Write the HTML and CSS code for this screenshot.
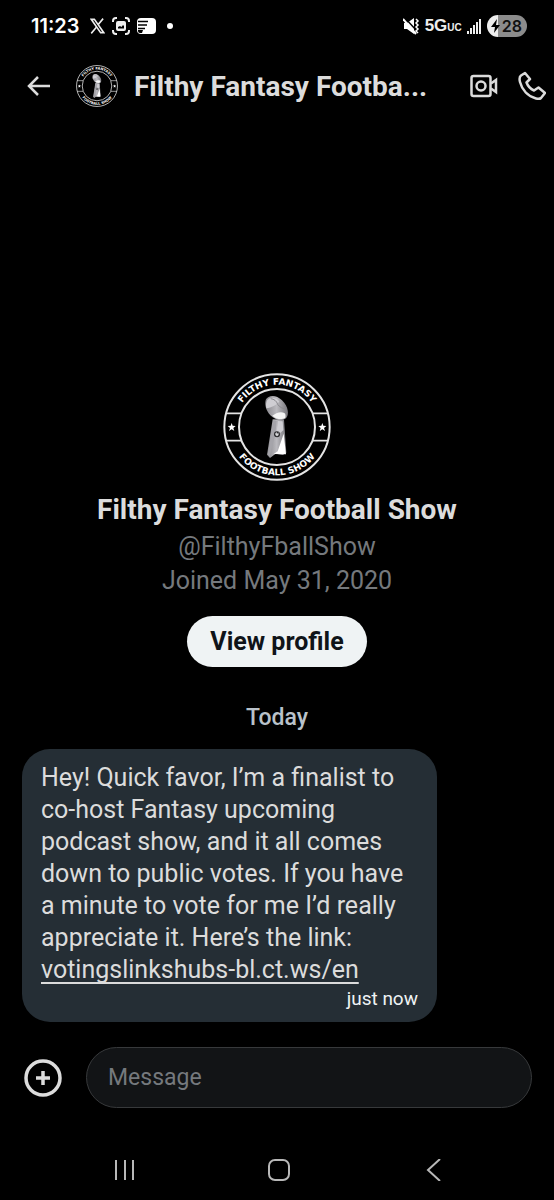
FILE: index.html
```html
<!DOCTYPE html>
<html lang="en">
<head>
  <meta charset="UTF-8">
  <meta name="viewport" content="width=device-width, initial-scale=1">
  <title>Messages</title>
  <link rel="stylesheet" href="styles.css">
</head>
<body>

  <!-- Shared logo -->
  <svg class="sprite" aria-hidden="true">
    <defs>
      <linearGradient id="silver" x1="0" y1="0" x2="1" y2="0">
        <stop offset="0" stop-color="#88878c"/>
        <stop offset="0.5" stop-color="#bbbabf"/>
        <stop offset="1" stop-color="#77767b"/>
      </linearGradient>
      <path id="arcTop" d="M35 162a127 127 0 0 1 254 0"/>
      <path id="arcBottom" d="M17 162a145 145 0 0 0 290 0"/>
      <symbol id="logo" viewBox="0 0 324 324">
        <circle cx="162" cy="162" r="158" fill="#000" stroke="#e4e4e4" stroke-width="6"/>
        <circle cx="162" cy="162" r="114" fill="none" stroke="#e4e4e4" stroke-width="6"/>
        <path d="M9 121h46M9 203h46M269 121h46M269 203h46" stroke="#e4e4e4" stroke-width="5"/>
        <path d="M26 150l3 8 9 1-7 6 3 9-8-5-8 5 3-9-7-6 9-1zM298 150l3 8 9 1-7 6 3 9-8-5-8 5 3-9-7-6 9-1z" fill="#fff"/>
        <text class="logo-text"><textPath href="#arcTop" startOffset="50%">FILTHY FANTASY</textPath></text>
        <text class="logo-text"><textPath href="#arcBottom" startOffset="50%">FOOTBALL SHOW</textPath></text>
        <!-- trophy -->
        <path d="M149 139l34 1 7 99-10 7-22-4-17 13-9-10z" fill="url(#silver)"/>
        <path d="M152 143l9 1-4 40-17 66-6-6z" fill="#a5a4aa"/>
        <path d="M182 182l7 62-37-1 12-8z" fill="#fff"/>
        <path d="M165 144l14 1 2 27-14 12-6-9z" fill="#cfced3"/>
        <path d="M129 79c7-13 31-15 48 3 20 19 22 44 12 54-13 10-32 6-47-9-15-16-18-36-13-48z" fill="url(#silver)"/>
        <path d="M133 81c9-12 29-7 36 5-8 9-24 18-39 20-2-9-1-18 3-25z" fill="#cfced3"/>
        <path d="M143 77c10 1 18 7 21 17 5 8 16 14 27 14" fill="none" stroke="#8a898e" stroke-width="3"/>
        <path d="M148 128c10-8 25-14 36-8 4 3 4 8 3 14-12 8-27 4-39-6z" fill="#f4f4f4"/>
        <circle cx="162" cy="184" r="9" fill="#29292c"/>
        <path d="M157 181l4-4 1 6 4-5 1 8-5 4-5-4z" fill="#d6d6d8"/>
      </symbol>
    </defs>
  </svg>

  <div class="screen">

    <!-- Status Bar -->
    <div class="status-bar">
      <div class="status-left">
        <span class="clock">11:23</span>
        <svg width="15" height="16" viewBox="0 0 24 24" preserveAspectRatio="none" fill="none" stroke="#eee">
          <path d="M2 2h5l15 20h-5z" stroke-width="2.500"/>
          <path d="M21 1l-8 9M10.500 13.500L2 23" stroke-width="2.500"/>
        </svg>
        <svg width="18" height="18" viewBox="0 0 18 18" fill="none" stroke="#eee" stroke-width="2">
          <path d="M1 5V4a3 3 0 0 1 3-3h1M13 1h1a3 3 0 0 1 3 3v1M17 13v1a3 3 0 0 1-3 3h-1M5 17H4a3 3 0 0 1-3-3v-1"/>
          <rect x="4" y="4" width="10" height="10" rx="2" fill="#eee" stroke="none"/>
          <path d="M6 11.500V10l2-1 1.500 1L11 8l1 1v2.500z" fill="#000" stroke="none"/>
        </svg>
        <svg width="19" height="16" viewBox="0 0 19 16">
          <rect x="0" y="0" width="19" height="16" rx="4" fill="#fff"/>
          <path d="M1 3.500h10M1 7h9M1 10.500h7" stroke="#000" stroke-width="1.500"/>
          <path d="M1 12h5l-1 3H3a2 2 0 0 1-2-2z" fill="#000"/>
        </svg>
        <span class="dot"></span>
      </div>
      <div class="status-right">
        <svg width="17" height="17" viewBox="0 0 17 17">
          <path d="M1 5h3L11 0v16L4 11H1z" fill="#fff"/>
          <path d="M1 -1l13 14" stroke="#000" stroke-width="1.500"/>
          <path d="M0 1l13 15" stroke="#fff" stroke-width="2"/>
          <path d="M13 1l2 2-2 2 2 2-2 2 2 2-2 2 2 2" fill="none" stroke="#fff" stroke-width="1.500"/>
        </svg>
        <span class="network">5G<small>UC</small></span>
        <svg width="15" height="15" viewBox="0 0 15 15" fill="#eee">
          <path d="M0 12h2v3H0zM3 9h2v6H3zM6 6h2v9H6zM9 3h2v12H9zM12 0h2v15h-2z"/>
        </svg>
        <span class="battery">
          <svg width="9" height="14" viewBox="0 0 9 14"><path d="M6 0L0 8h4l-1 6 6-8H5z" fill="#000"/></svg>
          28
        </span>
      </div>
    </div>

    <!-- Chat Header -->
    <header class="chat-header">
      <button class="icon-btn" aria-label="Back">
        <svg width="24" height="20" viewBox="0 0 24 20" fill="none" stroke="#dcdcdc" stroke-width="2.500">
          <path d="M23 10H2M11 1L2 10l9 9"/>
        </svg>
      </button>
      <svg class="avatar-small"><use href="#logo"/></svg>
      <h1>Filthy Fantasy Footba...</h1>
      <button class="icon-btn" aria-label="Video call">
        <svg width="28" height="24" viewBox="0 0 28 24" fill="none" stroke="#dcdcdc" stroke-width="2.500">
          <rect x="1.500" y="2" width="19" height="20" rx="2"/>
          <circle cx="11" cy="12" r="4.500"/>
          <path d="M21 9.500l5-3.500v12l-5-3.500"/>
        </svg>
      </button>
      <button class="icon-btn" aria-label="Call">
        <svg width="28" height="30" viewBox="0 0 28 30" fill="none" stroke="#dcdcdc" stroke-width="2.500" stroke-linejoin="round">
          <path d="M7 2L3 4.500C1 6 1.500 9 2 11c2 8 8 14.500 16 16.500 2 .5 4 .5 5-.5l4-5-6.500-5.500-4.500 3c-3.500-1.500-6-4-7.500-8L12 8z"/>
        </svg>
      </button>
    </header>

    <!-- Conversation -->
    <main class="conversation">
      <section class="profile">
        <svg class="avatar"><use href="#logo"/></svg>
        <h2>Filthy Fantasy Football Show</h2>
        <p>@FilthyFballShow</p>
        <p>Joined May 31, 2020</p>
        <button class="profile-btn">View profile</button>
      </section>

      <div class="day">Today</div>

      <div class="bubble">
        <p>Hey! Quick favor, I’m a finalist to co-host Fantasy upcoming podcast show, and it all comes down to public votes. If you have a minute to vote for me I’d really appreciate it. Here’s the link: <a href="#">votingslinkshubs-bl.ct.ws/en</a></p>
        <time>just now</time>
      </div>
    </main>

    <!-- Message Box -->
    <form class="composer">
      <button type="button" class="icon-btn" aria-label="Add attachment">
        <svg width="38" height="38" viewBox="0 0 38 38" fill="none" stroke="#dcdcdc">
          <circle cx="19" cy="19" r="17" stroke-width="3.500"/>
          <path d="M12 19h14M19 12v14" stroke-width="3.500"/>
        </svg>
      </button>
      <input type="text" placeholder="Message" aria-label="Message">
    </form>

    <!-- System Navigation -->
    <nav class="system-nav">
      <button class="icon-btn" aria-label="Recent apps">
        <svg width="22" height="22" viewBox="0 0 22 22" stroke="#b8b8b8" stroke-width="2">
          <path d="M2 1v20M11 1v20M19 1v20"/>
        </svg>
      </button>
      <button class="icon-btn" aria-label="Home">
        <svg width="22" height="22" viewBox="0 0 22 22" fill="none" stroke="#b8b8b8" stroke-width="2">
          <rect x="1" y="1" width="20" height="20" rx="6"/>
        </svg>
      </button>
      <button class="icon-btn" aria-label="Back">
        <svg width="22" height="22" viewBox="0 0 22 22" fill="none" stroke="#b8b8b8" stroke-width="2">
          <path d="M18 0L6 11l12 11"/>
        </svg>
      </button>
    </nav>

  </div>

</body>
</html>
```

FILE: styles.css
```css
* {
  box-sizing: border-box;
}

body {
  margin: 0;
  background-color: #000;
  color: #dcdcdc;
  font-family: Roboto, 'Liberation Sans', sans-serif;
}

h1, h2, p {
  margin: 0;
}

svg {
  display: block;
  flex-shrink: 0;
}

.sprite {
  position: absolute;
  width: 0;
  height: 0;
}

.screen {
  min-height: 100vh;
  display: flex;
  flex-direction: column;
}

.icon-btn {
  padding: 0;
  border: none;
  background: none;
  cursor: pointer;
}

/* Status Bar */
.status-bar {
  height: 52px;
  padding: 0 27px 0 31px;
  display: flex;
  align-items: center;
  justify-content: space-between;
}

.status-left {
  display: flex;
  align-items: center;
  gap: 7px;
}

.clock {
  margin-right: 4px;
  color: #fff;
  font-family: Inter, sans-serif;
  font-size: 20px;
  font-weight: 600;
}

.dot {
  width: 6px;
  height: 6px;
  margin-left: 4px;
  border-radius: 50%;
  background-color: #fff;
}

.status-right {
  display: flex;
  align-items: center;
  gap: 5px;
}

.network {
  color: #eee;
  font-family: 'Liberation Sans', sans-serif;
  font-size: 17px;
  font-weight: 700;
}

.network small {
  font-size: 10px;
  font-weight: 700;
}

.battery {
  height: 22px;
  padding: 0 5px 0 4px;
  display: flex;
  align-items: center;
  gap: 2px;
  border-radius: 11px;
  background: linear-gradient(to right, #eee 28%, #8c8c8c 28%);
  color: #111;
  font-family: Inter, sans-serif;
  font-size: 16px;
  font-weight: 600;
}

/* Chat Header */
.chat-header {
  height: 68px;
  padding: 0 8px 0 27px;
  display: flex;
  align-items: center;
}

.avatar-small {
  width: 42px;
  height: 42px;
  margin: 0 16px 0 25px;
}

.chat-header h1 {
  flex: 1;
  font-size: 28px;
  font-weight: 700;
  white-space: nowrap;
}

.chat-header .icon-btn + .icon-btn {
  margin-left: 20px;
}

.logo-text {
  fill: #fff;
  font-family: 'DejaVu Sans', sans-serif;
  font-size: 27px;
  font-weight: 700;
  text-anchor: middle;
}

/* Conversation */
.conversation {
  flex: 1;
  padding: 0 22px;
  display: flex;
  flex-direction: column;
  justify-content: flex-end;
}

.profile {
  display: flex;
  flex-direction: column;
  align-items: center;
  text-align: center;
}

.avatar {
  width: 108px;
  height: 108px;
  margin-bottom: 11px;
}

.profile h2 {
  margin-bottom: 2px;
  font-size: 28px;
  line-height: 36px;
  font-weight: 700;
}

.profile p {
  color: #75797d;
  font-size: 25px;
  line-height: 34px;
}

.profile-btn {
  margin-top: 18px;
  padding: 0 23px;
  border: none;
  border-radius: 26px;
  background-color: #eff3f4;
  color: #0f1419;
  font-family: inherit;
  font-size: 25px;
  font-weight: 700;
  line-height: 51px;
  cursor: pointer;
}

.day {
  margin: 36px 0 16px;
  color: #b9c2ca;
  font-size: 23px;
  font-weight: 500;
  line-height: 30px;
  text-align: center;
}

.bubble {
  width: 415px;
  max-width: 100%;
  padding: 13px 19px 11px;
  border-radius: 28px;
  background-color: #252e35;
}

.bubble p {
  font-size: 25px;
  line-height: 32px;
}

.bubble a {
  color: inherit;
  text-underline-offset: 4px;
  text-decoration-thickness: 2px;
  text-decoration-skip-ink: none;
}

.bubble time {
  display: block;
  color: #eff3f4;
  font-size: 19px;
  line-height: 25px;
  text-align: right;
}

/* Message Box */
.composer {
  padding: 25px 22px 0 24px;
  display: flex;
  align-items: center;
  gap: 24px;
}

.composer input {
  flex: 1;
  min-width: 0;
  height: 61px;
  padding: 0 21px;
  border: 1px solid #37393b;
  border-radius: 31px;
  background-color: #121416;
  color: #dcdcdc;
  font-family: inherit;
  font-size: 23px;
}

.composer input::placeholder {
  color: #75797d;
}

/* System Navigation */
.system-nav {
  height: 92px;
  padding: 32px 44px 0 48px;
  display: flex;
  align-items: center;
  justify-content: space-around;
}
```
